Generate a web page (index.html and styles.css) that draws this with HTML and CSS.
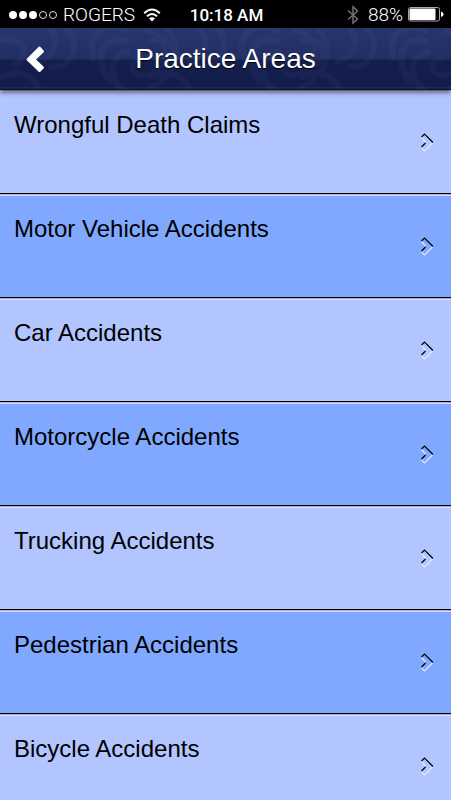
FILE: index.html
```html
<!DOCTYPE html>
<html lang="en">
<head>
<meta charset="utf-8">
<meta name="viewport" content="width=device-width, initial-scale=1">
<title>Practice Areas</title>
<link rel="stylesheet" href="styles.css">
</head>
<body>
<svg class="sprite" aria-hidden="true">
  <symbol id="chevron" viewBox="0 0 14 20">
    <path class="chevron-light" d="M1.5 5.5 5.5 10M1.5 16 4.5 19 13 10.5"/>
    <path class="chevron-dark" d="M1.5 5 4.5 2 13 10.5M5.5 11 1.5 15"/>
  </symbol>
</svg>
<div class="status">
  <div class="carrier">
    <svg class="signal" viewBox="0 0 48 10" aria-hidden="true">
      <g fill="#fff"><circle cx="4" cy="5" r="4"/><circle cx="14" cy="5" r="4"/><circle cx="24" cy="5" r="4"/></g>
      <g fill="none" stroke="#ddd"><circle cx="34" cy="5" r="3.5"/><circle cx="44" cy="5" r="3.5"/></g>
    </svg>
    <span>ROGERS</span>
    <svg class="wifi" viewBox="0 0 18 14" aria-hidden="true">
      <g fill="none" stroke="#fff" stroke-width="2"><path d="M1.2 5.3Q9-2.2 16.8 5.3"/><path d="M4 8.3Q9 3.7 14 8.3"/></g>
      <path fill="#fff" d="M6 10.3Q9 8 12 10.3L9 13.5Z"/>
    </svg>
  </div>
  <div class="time">10:18 AM</div>
  <div class="power">
    <svg class="bluetooth" viewBox="0 0 12 20" aria-hidden="true"><path fill="none" stroke="#707070" stroke-width="1.5" d="M1 5.5 10.5 14 6 18V1.8L10.5 6 1 14.5"/></svg>
    <span>88%</span>
    <svg class="battery" viewBox="0 0 36 15" aria-hidden="true">
      <rect x=".5" y=".5" width="31" height="13.5" rx="2" fill="#000" stroke="#aaa"/>
      <rect x="1.5" y="1.5" width="26" height="11.5" rx="1" fill="#fff"/>
      <path fill="#fff" d="M33 4.5Q35.5 5 35.5 7.3T33 10Z"/>
    </svg>
  </div>
</div>
<header class="header">
  <svg class="pattern" viewBox="0 0 451 62" preserveAspectRatio="xMidYMid slice" aria-hidden="true">
    <defs>
      <g id="flourish" fill="none" stroke-linecap="round">
        <path stroke-width="7" d="M94 30C85 6 107-9 126 2M110 53C92 29 103 7 126 13M129 66C107 54 107 28 128 24"/>
        <path stroke-width="5" d="M145 3C172 4 171 44 145 47C129 49 128 31 141 31M166 0C188 19 176 48 151 59"/>
        <path stroke-width="6" d="M47-3C61 10 55 29 38 34M65-3C83 17 72 40 51 39M2 12C24 9 31 25 16 36M2 49Q25 38 38 58"/>
      </g>
    </defs>
    <use href="#flourish"/><use href="#flourish" x="150"/><use href="#flourish" x="300"/>
  </svg>
  <button class="back" type="button" aria-label="Back">
    <svg viewBox="0 0 20 28" aria-hidden="true"><path fill="#fff" d="M1 13.5Q0 14.5 1 15.5L12.5 26.5Q13.5 27.5 14.5 26.5L17.5 23.5Q18.5 22.5 17.5 21.5L10 14.5 17.5 7.5Q18.5 6.5 17.5 5.5L14.5 2Q13.5 1 12.5 2Z"/></svg>
  </button>
  <h1>Practice Areas</h1>
</header>
<main class="list">
  <a class="row" href="#"><span>Wrongful Death Claims</span><svg class="chevron" aria-hidden="true"><use href="#chevron"/></svg></a>
  <a class="row" href="#"><span>Motor Vehicle Accidents</span><svg class="chevron" aria-hidden="true"><use href="#chevron"/></svg></a>
  <a class="row" href="#"><span>Car Accidents</span><svg class="chevron" aria-hidden="true"><use href="#chevron"/></svg></a>
  <a class="row" href="#"><span>Motorcycle Accidents</span><svg class="chevron" aria-hidden="true"><use href="#chevron"/></svg></a>
  <a class="row" href="#"><span>Trucking Accidents</span><svg class="chevron" aria-hidden="true"><use href="#chevron"/></svg></a>
  <a class="row" href="#"><span>Pedestrian Accidents</span><svg class="chevron" aria-hidden="true"><use href="#chevron"/></svg></a>
  <a class="row" href="#"><span>Bicycle Accidents</span><svg class="chevron" aria-hidden="true"><use href="#chevron"/></svg></a>
</main>
</body>
</html>
```
FILE: styles.css
```css
* { box-sizing: border-box; }

html, body { height: 100%; }

body {
  margin: 0;
  display: flex;
  flex-direction: column;
  overflow: hidden;
  background: #b2c5ff;
  color: #000;
  font-family: "Liberation Sans", Arial, sans-serif;
}

.sprite { position: absolute; width: 0; height: 0; }

.status {
  display: grid;
  grid-template-columns: 1fr auto 1fr;
  align-items: center;
  flex: none;
  height: 28px;
  padding: 1px 7px 0 9px;
  background: #000;
  color: #fff;
  font-family: Roboto, sans-serif;
  font-size: 19px;
  line-height: 20px;
}

.carrier, .power { display: flex; align-items: center; font-weight: 300; }
.carrier { gap: 6px; }
.power { justify-content: flex-end; gap: 5px; }
.signal { width: 48px; height: 10px; }
.wifi { width: 18px; height: 14px; margin-left: 2px; }
.time { font-size: 17px; font-weight: 500; }
.bluetooth { width: 12px; height: 20px; margin-right: 4px; }
.battery { width: 36px; height: 15px; }

.header {
  position: relative;
  z-index: 1;
  display: grid;
  grid-template-columns: 72px 1fr 72px;
  align-items: center;
  flex: none;
  height: 62px;
  background: linear-gradient(#26356b 0, #202e64 31px, #141e4d 32px, #131d4c 59px, #26366f 60px, #080e2b 61px);
  box-shadow: 0 2px 5px rgba(0, 0, 0, .65);
}

.pattern {
  position: absolute;
  inset: 0;
  width: 100%;
  height: 100%;
  stroke: #6b7bb5;
  opacity: .07;
}

.back {
  position: relative;
  justify-self: center;
  width: 20px;
  height: 28px;
  padding: 0;
  border: 0;
  background: none;
}

.back svg { display: block; width: 20px; height: 28px; }

h1 {
  position: relative;
  margin: 0;
  color: #fff;
  font-size: 28px;
  font-weight: 400;
  line-height: 32px;
  text-align: center;
  text-shadow: 0 1px 1px #000;
}

.list { flex: 1; }

.row {
  display: flex;
  justify-content: space-between;
  align-items: flex-start;
  height: 104px;
  padding: 20px 17px 0 14px;
  border-bottom: 1px solid #000;
  background: #b2c5ff;
  box-shadow: inset 0 1px #a5b2d0, inset 0 2px #d2ddff;
  color: #000;
  font-size: 24px;
  line-height: 30px;
  text-decoration: none;
}

.row:nth-child(even) { background: #80a8ff; }

.chevron { flex: none; width: 14px; height: 20px; margin-top: 22px; }
.chevron-dark, .chevron-light { fill: none; stroke: #000; stroke-width: 1.2; }
.chevron-light { stroke: #e0e8ff; }
```
